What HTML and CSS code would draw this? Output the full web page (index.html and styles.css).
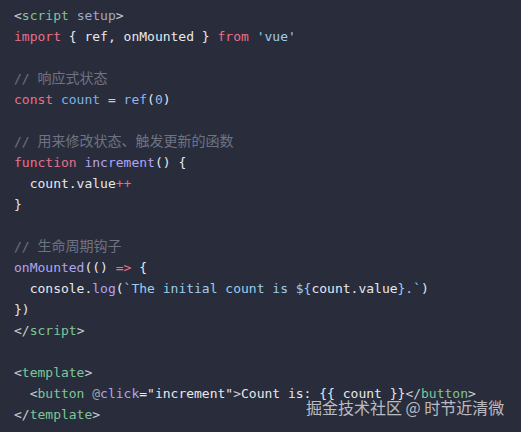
FILE: index.html
```html
<!DOCTYPE html>
<html>
<head>
<meta charset="utf-8">
<link rel="stylesheet" href="styles.css">
</head>
<body>
<div class="code">
<pre><span class="p">&lt;</span><span class="tag">script</span> <span class="attr">setup</span><span class="p">&gt;</span>
<span class="kw">import</span> { ref, onMounted } <span class="kw">from</span> <span class="str">'vue'</span>

<span class="cm">// <span class="cjk">响应式状态</span></span>
<span class="kw">const</span> <span class="var">count</span> <span class="op">=</span> <span class="fn2">ref</span>(<span class="num">0</span>)

<span class="cm">// <span class="cjk">用来修改状态、触发更新的函数</span></span>
<span class="kw">function</span> <span class="fn">increment</span>() {
  count.value<span class="kw">++</span>
}

<span class="cm">// <span class="cjk">生命周期钩子</span></span>
<span class="fn">onMounted</span>(() <span class="kw">=&gt;</span> {
  console.<span class="fn">log</span>(<span class="str">`The initial count is ${</span>count.value<span class="str">}.`</span>)
})
<span class="p">&lt;/</span><span class="tag">script</span><span class="p">&gt;</span>

<span class="p">&lt;</span><span class="tag">template</span><span class="p">&gt;</span>
  <span class="p">&lt;</span><span class="tag">button</span> <span class="at">@</span><span class="fn">click</span>="increment"<span class="p">&gt;</span>Count is: {{ count }}<span class="p">&lt;/</span><span class="tag">button</span><span class="p">&gt;</span>
<span class="p">&lt;/</span><span class="tag">template</span><span class="p">&gt;</span></pre>
<div class="mark">掘金技术社区 @ 时节近清微</div>
</div>
</body>
</html>
```
FILE: styles.css
```css
html, body {
  margin: 0;
  padding: 0;
  background: #292d3b;
}
.code {
  position: relative;
  width: 521px;
  height: 432px;
  background: #292d3b;
  overflow: hidden;
}
pre {
  margin: 0;
  padding: 5px 0 0 14px;
  font-family: "DejaVu Sans Mono", "Noto Sans CJK SC", monospace;
  font-size: 13px;
  line-height: 21px;
  color: #e6e8ee;
}
.p { color: #c9ccd4; }
.tag { color: #7ec699; }
.attr { color: #a3a8c6; }
.kw { color: #e8708a; }
.str { color: #9ccdf0; }
.cm { color: #6e7384; }
.cjk {
  font-family: "Noto Sans CJK SC", sans-serif;
  font-size: 14px;
  line-height: 0;
}
.var { color: #78b4ef; }
.op { color: #c9ccd4; }
.fn { color: #b2a4f2; }
.fn2 { color: #8cb4f5; }
.num { color: #a7b7e0; }
.at { color: #9a9fb0; }
.mark {
  position: absolute;
  left: 306px;
  top: 396px;
  font-family: "Noto Sans CJK SC", sans-serif;
  font-size: 16px;
  line-height: 22px;
  color: rgba(228, 228, 234, 0.78);
}
```
